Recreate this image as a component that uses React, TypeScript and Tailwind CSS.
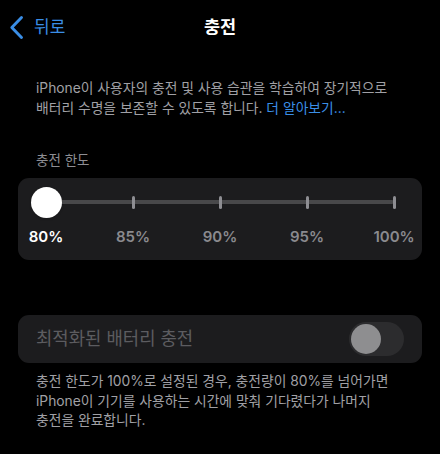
import React from "react";

const stops = ["80%", "85%", "90%", "95%", "100%"];

export default function App() {
  return (
    <div
      className="w-[440px] h-[454px] bg-black text-white overflow-hidden"
      style={{ fontFamily: '"Inter", "Noto Sans CJK KR", sans-serif' }}
    >
      {/* Header */}
      <div className="relative h-[54px] flex items-center justify-center">
        <div className="absolute left-[9px] top-0 h-[54px] flex items-center gap-[10px] text-[#3a8ee6]">
          <svg width="15" height="25" viewBox="0 0 15 25" fill="none">
            <path d="M12.5 2.5 L2.8 12.5 L12.5 22.5" stroke="currentColor" strokeWidth="2.9" strokeLinecap="round" strokeLinejoin="round" />
          </svg>
          <span className="text-[17px] leading-none">뒤로</span>
        </div>
        <span className="text-[17.5px] font-bold leading-none">충전</span>
      </div>

      {/* Description */}
      <div className="mt-[24px] px-[36px] text-[13.8px] leading-[20px] text-[#a0a0a5] whitespace-nowrap">
        iPhone이 사용자의 충전 및 사용 습관을 학습하여 장기적으로
        <br />
        배터리 수명을 보존할 수 있도록 합니다. <span className="text-[#3a8ee6]">더 알아보기...</span>
      </div>

      {/* Section label */}
      <div className="mt-[32px] px-[36px] text-[13.5px] leading-[20px] text-[#8e8e93]">충전 한도</div>

      {/* Slider card */}
      <div className="mt-[8px] mx-[18px] h-[82px] rounded-[11px] bg-[#1c1c1e] px-[28px] pt-[8px]">
        <div className="relative h-[32px] flex items-center">
          <div className="absolute left-0 right-0 top-[14px] h-[4px] rounded-full bg-[#48484a]" />
          <div className="relative w-full flex justify-between items-center">
            {stops.map((s, i) => (
              <div key={s} className="w-0 flex justify-center">
                {i === 0 ? (
                  <div className="shrink-0 w-[31px] h-[31px] rounded-full bg-white shadow" />
                ) : (
                  <div className="shrink-0 w-[3px] h-[13px] rounded-full bg-[#8e8e93]" />
                )}
              </div>
            ))}
          </div>
        </div>
        <div className="mt-[9px] flex justify-between">
          {stops.map((s, i) => (
            <div key={s} className="w-0 flex justify-center">
              <span
                className={
                  "shrink-0 text-[15px] leading-[20px] font-semibold " +
                  (i === 0 ? "text-white" : "text-[#8a8a8e]")
                }
              >
                {s}
              </span>
            </div>
          ))}
        </div>
      </div>

      {/* Optimized charging card */}
      <div className="mt-[55px] mx-[18px] h-[48px] rounded-[11px] bg-[#1c1c1e] pl-[18px] pr-[18px] flex items-center justify-between">
        <span className="text-[17.8px] text-[#5c5c60]">최적화된 배터리 충전</span>
        <div className="w-[55px] h-[34px] rounded-full bg-[#2c2c2e] flex items-center px-[2px]">
          <div className="w-[30px] h-[30px] rounded-full bg-[#8e8e90]" />
        </div>
      </div>

      {/* Footer */}
      <div className="mt-[9px] px-[36px] text-[13.8px] leading-[19.5px] text-[#a0a0a5] whitespace-nowrap">
        충전 한도가 100%로 설정된 경우, 충전량이 80%를 넘어가면
        <br />
        iPhone이 기기를 사용하는 시간에 맞춰 기다렸다가 나머지
        <br />
        충전을 완료합니다.
      </div>
    </div>
  );
}
